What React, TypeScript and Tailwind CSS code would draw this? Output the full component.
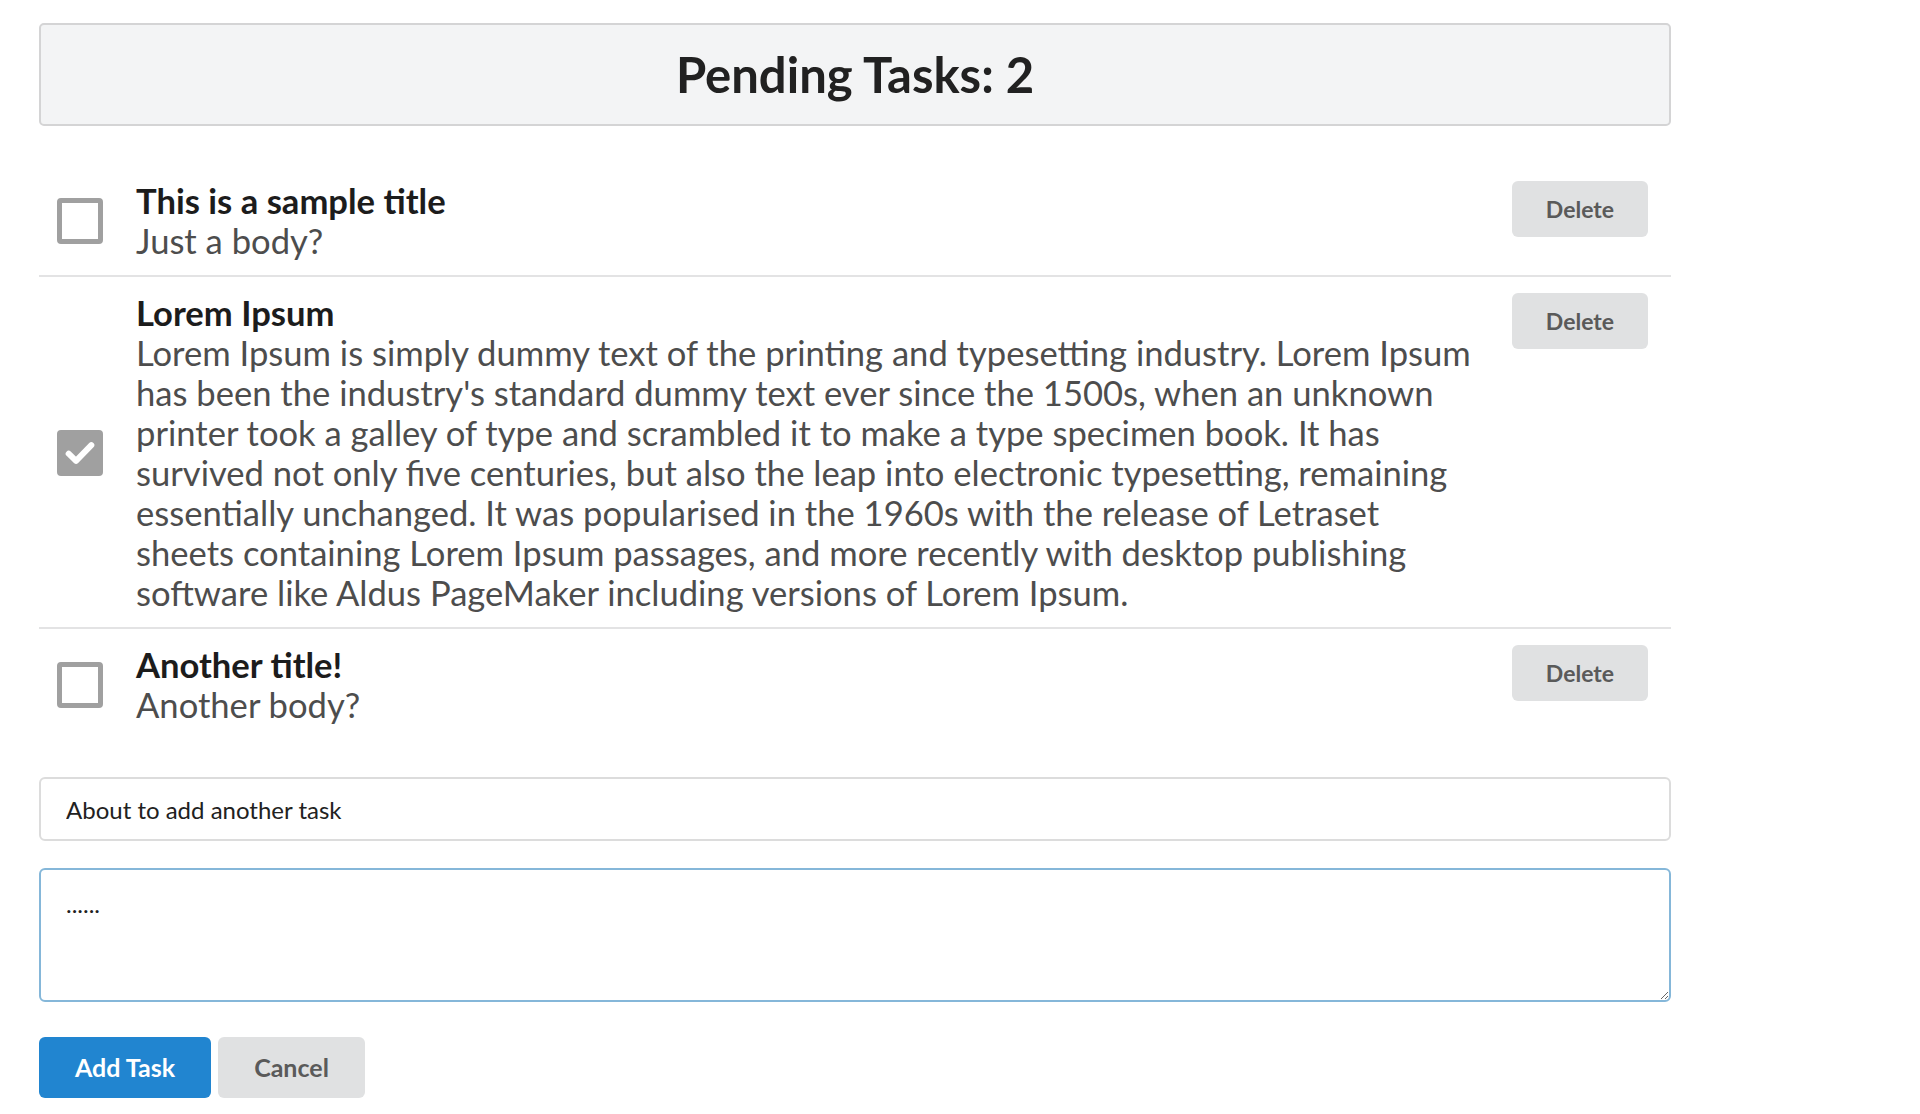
import { useState } from 'react'

type Task = { id: number; title: string; body: string; done: boolean }

const INITIAL: Task[] = [
  { id: 1, title: 'This is a sample title', body: 'Just a body?', done: false },
  {
    id: 2,
    title: 'Lorem Ipsum',
    body: "Lorem Ipsum is simply dummy text of the printing and typesetting industry. Lorem Ipsum has been the industry's standard dummy text ever since the 1500s, when an unknown printer took a galley of type and scrambled it to make a type specimen book. It has survived not only five centuries, but also the leap into electronic typesetting, remaining essentially unchanged. It was popularised in the 1960s with the release of Letraset sheets containing Lorem Ipsum passages, and more recently with desktop publishing software like Aldus PageMaker including versions of Lorem Ipsum.",
    done: true,
  },
  { id: 3, title: 'Another title!', body: 'Another body?', done: false },
]

function Checkbox({ checked, onClick }: { checked: boolean; onClick: () => void }) {
  return (
    <button
      onClick={onClick}
      className={`w-[46px] h-[46px] shrink-0 self-center rounded-[4px] border-[5px] border-[#a0a0a0] flex items-center justify-center ${checked ? 'bg-[#a0a0a0]' : 'bg-white'}`}
    >
      {checked && (
        <svg viewBox="0 0 24 24" className="w-[34px] h-[34px]" fill="none" stroke="white" strokeWidth="4.2" strokeLinecap="round" strokeLinejoin="round">
          <path d="M4 12.5l5.2 5L20 6.5" />
        </svg>
      )}
    </button>
  )
}

export default function App() {
  const [tasks, setTasks] = useState<Task[]>(INITIAL)
  const [title, setTitle] = useState('About to add another task')
  const [body, setBody] = useState('......')

  const pending = tasks.filter(t => !t.done).length

  const toggle = (id: number) => setTasks(prev => prev.map(t => (t.id === id ? { ...t, done: !t.done } : t)))
  const remove = (id: number) => setTasks(prev => prev.filter(t => t.id !== id))
  const add = () => {
    if (!title.trim()) return
    setTasks(prev => [...prev, { id: Date.now(), title, body, done: false }])
    setTitle('')
    setBody('')
  }

  return (
    <div className="min-h-screen bg-white font-['Lato','Helvetica_Neue',Arial,sans-serif] text-[#212121]">
      <div className="ml-[39px] pt-[23px] w-[1632px]">
        {/* Header */}
        <div className="h-[103px] bg-[#f3f4f5] border-2 border-[#d4d4d5] rounded-[5px] flex items-center justify-center">
          <h1 className="text-[49px] font-bold leading-none text-[#212121]">Pending Tasks: {pending}</h1>
        </div>

        {/* Task list */}
        <div className="mt-[39px]">
          {tasks.map((task, i) => (
            <div
              key={task.id}
              className={`flex items-start pt-[16px] pb-[14px] pl-[18px] pr-[23px] ${i < tasks.length - 1 ? 'border-b-2 border-[#e3e3e4]' : ''}`}
            >
              <Checkbox checked={task.done} onClick={() => toggle(task.id)} />
              <div className="flex-1 ml-[33px] mr-[34px] min-w-0">
                <div className="text-[34.6px] font-bold leading-[40px] text-[#1c1c1c]">{task.title}</div>
                <div className="text-[34.6px] leading-[40px] text-[#4d4d4d]">{task.body}</div>
              </div>
              <button
                onClick={() => remove(task.id)}
                className="w-[136px] h-[56px] shrink-0 rounded-[6px] bg-[#e0e1e2] text-[23px] font-bold text-[#5a5a5a]"
              >
                Delete
              </button>
            </div>
          ))}
        </div>

        {/* New task form */}
        <input
          value={title}
          onChange={e => setTitle(e.target.value)}
          className="mt-[38px] block w-full h-[64px] px-[25px] border-2 border-[#dcdcdc] rounded-[6px] text-[24px] text-[#212121] outline-none"
        />
        <textarea
          value={body}
          onChange={e => setBody(e.target.value)}
          className="mt-[27px] block w-full h-[134px] px-[25px] py-[18px] border-2 border-[#85b7d9] rounded-[6px] text-[24px] leading-[1.3] text-[#212121] outline-none"
        />

        <div className="mt-[35px] flex gap-[7px]">
          <button onClick={add} className="w-[172px] h-[61px] rounded-[6px] bg-[#2185d0] text-white text-[25px] font-bold">
            Add Task
          </button>
          <button
            onClick={() => { setTitle(''); setBody('') }}
            className="w-[147px] h-[61px] rounded-[6px] bg-[#e0e1e2] text-[#5a5a5a] text-[25px] font-bold"
          >
            Cancel
          </button>
        </div>
      </div>
    </div>
  )
}
